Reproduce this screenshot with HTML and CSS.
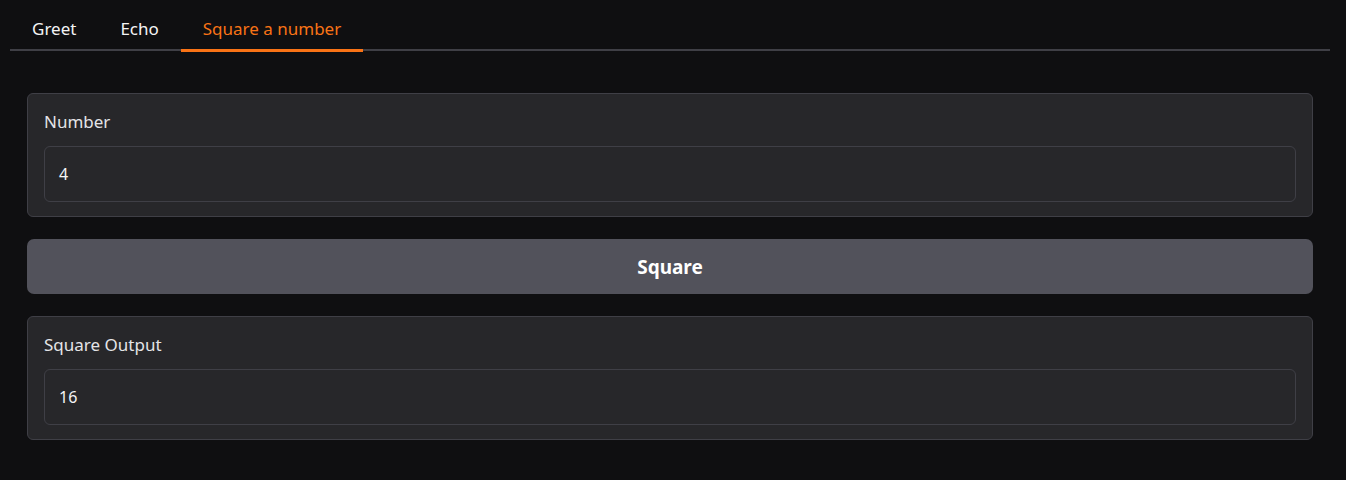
FILE: index.html
```html
<!DOCTYPE html>
<html>
<head>
<meta charset="utf-8">
<link rel="stylesheet" href="styles.css">
</head>
<body>
<div class="app">
  <nav class="tabs">
    <button class="tab">Greet</button>
    <button class="tab">Echo</button>
    <button class="tab active">Square a number</button>
  </nav>
  <div class="tab-body">
    <div class="block">
      <label class="label">Number</label>
      <div class="field">4</div>
    </div>
    <button class="primary">Square</button>
    <div class="block">
      <label class="label">Square Output</label>
      <div class="field">16</div>
    </div>
  </div>
</div>
</body>
</html>
```
FILE: styles.css
```css
html, body {
  margin: 0;
  padding: 0;
  background: #0f0f11;
  font-family: "Noto Sans", sans-serif;
  color: #e4e4e7;
}
.app {
  padding: 0 16px 0 10px;
}
.tabs {
  display: flex;
  border-bottom: 2px solid #3f3f46;
  height: 49px;
  box-sizing: content-box;
}
.tab {
  background: none;
  border: none;
  font: inherit;
  font-size: 17px;
  color: #f4f4f5;
  padding: 8px 22px 0 22px;
  height: 52px;
  margin-bottom: -3px;
  box-sizing: border-box;
  border-bottom: 3px solid transparent;
}
.tab.active {
  color: #f97316;
  border-bottom-color: #f97316;
}
.tab-body {
  padding: 42px 17px 0 17px;
  display: flex;
  flex-direction: column;
  gap: 22px;
}
.block {
  background: #27272a;
  border: 1px solid #3f3f46;
  border-radius: 6px;
  padding: 16px 16px 14px 16px;
  display: flex;
  flex-direction: column;
  gap: 12px;
}
.label {
  font-size: 17px;
  color: #e4e4e7;
  line-height: 24px;
}
.field {
  border: 1px solid #3f3f46;
  border-radius: 6px;
  height: 54px;
  display: flex;
  align-items: center;
  padding: 0 14px;
  font-size: 16px;
  color: #f4f4f5;
}
.primary {
  height: 55px;
  background: #52525b;
  border: none;
  border-radius: 7px;
  color: #ffffff;
  font: inherit;
  font-weight: 700;
  font-size: 19px;
}
```
